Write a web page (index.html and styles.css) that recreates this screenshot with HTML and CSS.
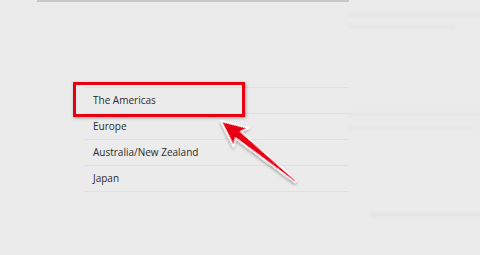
FILE: index.html
```
<!DOCTYPE html>
<html>
    <head>
        <title>Region</title>
        <meta charset="UTF-8">
        <link rel="stylesheet" href="styles.css">
    </head>
    <body>
        <div class="page">
            <section class="main">
                <ul class="regions">
                    <li class="selected">The Americas</li>
                    <li>Europe</li>
                    <li>Australia/New Zealand</li>
                    <li>Japan</li>
                </ul>
            </section>
            <aside class="side">
                <div class="blur b1"></div>
                <div class="blur b2"></div>
                <div class="blur b3"></div>
                <div class="blur b4"></div>
                <div class="blur b5"></div>
            </aside>
        </div>
        <div class="highlight"></div>
        <svg class="arrow" width="120" height="100" viewBox="0 0 120 100">
            <defs>
                <filter id="shadow" x="-20%" y="-20%" width="140%" height="140%">
                    <feDropShadow dx="1" dy="1.5" stdDeviation="1.5" flood-color="#000" flood-opacity="0.35"/>
                </filter>
            </defs>
            <g transform="translate(5 5) rotate(39)" filter="url(#shadow)">
                <polygon points="0,0 26,-12 22,-4.2 96,-1 96,1 22,4.2 26,12"
                         fill="#e60012" stroke="#fff" stroke-width="1.4" stroke-linejoin="round"/>
            </g>
        </svg>
    </body>
</html>
```
FILE: styles.css
```
body {
    margin: 0;
    background-color: #ebebeb;
    font-family: "Open Sans", "Noto Sans", sans-serif;
    overflow: hidden;
}
.page {
    display: flex;
    height: 255px;
}
.main {
    width: 312px;
    margin-left: 37px;
    border-top: 2px solid #c8c8c8;
}
.regions {
    list-style: none;
    margin: 85px 0 0 48px;
    padding: 0;
    border-bottom: 1px solid #e0e0e0;
}
.regions li {
    height: 25px;
    line-height: 25px;
    border-top: 1px solid #e0e0e0;
    padding-left: 8px;
    font-size: 10px;
    color: #2c2c2c;
}
.side {
    flex: 1;
    display: flex;
    flex-direction: column;
}
.blur {
    background-color: #e3e3e3;
    filter: blur(1.5px);
}
.b1 {
    height: 3px;
    margin-top: 13px;
}
.b2 {
    height: 3px;
    margin: 9px 25px 0 0;
}
.b3 {
    height: 2px;
    margin: 85px 0 0 0;
}
.b4 {
    height: 2px;
    margin: 12px 0 0 0;
    background-color: #e6e6e6;
}
.b5 {
    height: 4px;
    margin: 84px 0 0 22px;
}
.highlight {
    position: absolute;
    left: 73px;
    top: 82px;
    width: 166px;
    height: 29px;
    border: 3px solid #e60012;
    box-shadow: 1px 1px 3px rgba(0, 0, 0, .35);
}
.arrow {
    position: absolute;
    left: 216px;
    top: 116px;
}
```
